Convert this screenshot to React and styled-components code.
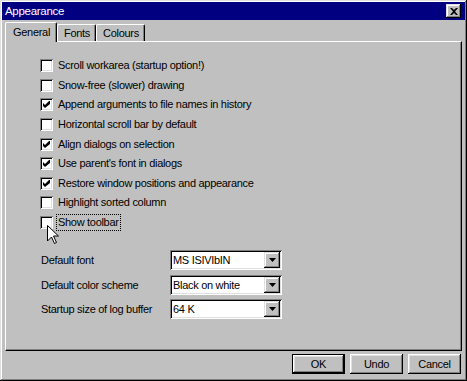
import React from 'react';
import styled, { createGlobalStyle } from 'styled-components';

const GlobalStyle = createGlobalStyle`
  html, body {
    margin: 0;
    padding: 0;
    background: #c0c0c0;
  }
  body {
    font-family: "Liberation Sans", Arial, sans-serif;
    font-size: 11px;
    letter-spacing: -0.3px;
    color: #000;
  }
`;

const raised = `
  box-shadow: inset -1px -1px #000, inset 1px 1px #dfdfdf,
    inset -2px -2px #808080, inset 2px 2px #fff;
`;

const sunken = `
  box-shadow: inset 1px 1px #808080, inset -1px -1px #fff,
    inset 2px 2px #000, inset -2px -2px #dfdfdf;
`;

const options = [
  { label: 'Scroll workarea (startup option!)', checked: false },
  { label: 'Snow-free (slower) drawing', checked: false },
  { label: 'Append arguments to file names in history', checked: true },
  { label: 'Horizontal scroll bar by default', checked: false },
  { label: 'Align dialogs on selection', checked: true },
  { label: "Use parent's font in dialogs", checked: true },
  { label: 'Restore window positions and appearance', checked: true },
  { label: 'Highlight sorted column', checked: false },
  { label: 'Show toolbar', checked: false, focused: true },
];

const combos = [
  { label: 'Default font', value: 'MS ISIVIbIN' },
  { label: 'Default color scheme', value: 'Black on white' },
  { label: 'Startup size of log buffer', value: '64 K' },
];

const Check = () => (
  <svg width="7" height="7" viewBox="0 0 7 7">
    <path d="M0 2 L2 4 L6 0 L7 0 L7 3 L2 7 L0 5 Z" fill="#000" />
  </svg>
);

const Arrow = () => (
  <svg width="7" height="4" viewBox="0 0 7 4">
    <path d="M0 0 H7 L3.5 4 Z" fill="#000" />
  </svg>
);

const App = () => {
  return (
    <>
      <GlobalStyle />
      <Window>
        <TitleBar>
          <Title>Appearance</Title>
          <CloseButton>
            <svg width="8" height="7" viewBox="0 0 8 7">
              <path d="M0 0 H2 L4 2 L6 0 H8 L5 3.5 L8 7 H6 L4 5 L2 7 H0 L3 3.5 Z" fill="#000" />
            </svg>
          </CloseButton>
        </TitleBar>
        <Body>
          <Tabs>
            <Tab $active>General</Tab>
            <Tab>Fonts</Tab>
            <Tab>Colours</Tab>
          </Tabs>
          <Panel>
            <CheckList>
              {options.map((o) => (
                <CheckRow key={o.label}>
                  <Box>{o.checked && <Check />}</Box>
                  <CheckLabel $focused={o.focused}>{o.label}</CheckLabel>
                </CheckRow>
              ))}
            </CheckList>
            <ComboGrid>
              {combos.map((c) => (
                <React.Fragment key={c.label}>
                  <ComboLabel>{c.label}</ComboLabel>
                  <Combo>
                    <ComboText>{c.value}</ComboText>
                    <DropButton>
                      <Arrow />
                    </DropButton>
                  </Combo>
                </React.Fragment>
              ))}
            </ComboGrid>
          </Panel>
          <ButtonRow>
            <Button $default>OK</Button>
            <Button>Undo</Button>
            <Button>Cancel</Button>
          </ButtonRow>
        </Body>
        <Cursor width="12" height="20" viewBox="0 0 12 20">
          <path
            d="M0.5 0.5 V16 L4.5 12 L7.5 18.5 L9.5 17.5 L6.5 11 H11.5 Z"
            fill="#fff"
            stroke="#000"
            strokeWidth="1"
          />
        </Cursor>
      </Window>
    </>
  );
};

export default App;

const Window = styled.div`
  position: relative;
  width: 467px;
  height: 381px;
  box-sizing: border-box;
  padding: 2px;
  background: #c0c0c0;
  display: flex;
  flex-direction: column;
  ${raised}
`;

const TitleBar = styled.div`
  height: 18px;
  background: #000080;
  display: flex;
  align-items: center;
  justify-content: space-between;
  padding: 0 4px 0 3px;
`;

const Title = styled.span`
  color: #fff;
  font-size: 11.5px;
`;

const CloseButton = styled.div`
  width: 15px;
  height: 14px;
  box-sizing: border-box;
  background: #c0c0c0;
  display: flex;
  align-items: center;
  justify-content: center;
  ${raised}
`;

const Body = styled.div`
  flex: 1;
  display: flex;
  flex-direction: column;
  padding: 2px 3px 0;
`;

const Tabs = styled.div`
  height: 19px;
  display: flex;
  align-items: flex-end;
  position: relative;
  z-index: 1;
`;

const Tab = styled.div`
  height: ${(p) => (p.$active ? '20px' : '17px')};
  margin-bottom: ${(p) => (p.$active ? '-1px' : '0')};
  box-sizing: border-box;
  padding: ${(p) => (p.$active ? '3px 6px 0 7px' : '0 5px 0 6px')};
  display: flex;
  align-items: ${(p) => (p.$active ? 'flex-start' : 'center')};
  background: #c0c0c0;
  border-top: 1px solid #fff;
  border-left: 1px solid #fff;
  border-right: 1px solid #000;
  border-radius: 2px 2px 0 0;
  box-shadow: inset -1px 0 #808080;
`;

const Panel = styled.div`
  height: 310px;
  box-sizing: border-box;
  padding: 14px 0 0 34px;
  border-top: 1px solid #fff;
  border-left: 1px solid #fff;
  border-right: 1px solid #000;
  border-bottom: 1px solid #000;
  box-shadow: inset -1px -1px #808080;
`;

const CheckList = styled.div`
  display: flex;
  flex-direction: column;
`;

const CheckRow = styled.div`
  height: 19.6px;
  display: flex;
  align-items: center;
  gap: 3px;
`;

const Box = styled.div`
  width: 13px;
  height: 13px;
  box-sizing: border-box;
  background: #fff;
  display: flex;
  align-items: center;
  justify-content: center;
  ${sunken}
`;

const CheckLabel = styled.span`
  padding: 1px;
  border: 1px dotted ${(p) => (p.$focused ? '#000' : 'transparent')};
  line-height: 13px;
`;

const ComboGrid = styled.div`
  margin-top: 18px;
  margin-left: 1px;
  display: grid;
  grid-template-columns: 129px 112px;
  grid-auto-rows: 20px;
  row-gap: 4.5px;
  align-items: center;
`;

const ComboLabel = styled.span``;

const Combo = styled.div`
  height: 20px;
  box-sizing: border-box;
  background: #fff;
  padding: 2px;
  display: flex;
  align-items: center;
  ${sunken}
`;

const ComboText = styled.span`
  flex: 1;
  padding-left: 1px;
`;

const DropButton = styled.div`
  width: 16px;
  height: 16px;
  box-sizing: border-box;
  background: #c0c0c0;
  display: flex;
  align-items: center;
  justify-content: center;
  ${raised}
`;

const ButtonRow = styled.div`
  margin-top: 3px;
  padding-right: 1px;
  display: flex;
  justify-content: flex-end;
  gap: 5px;
`;

const Button = styled.div`
  width: 53px;
  height: 20px;
  box-sizing: border-box;
  display: flex;
  align-items: center;
  justify-content: center;
  background: #c0c0c0;
  border: ${(p) => (p.$default ? '1px solid #000' : 'none')};
  box-shadow: inset -1px -1px #000, inset 1px 1px #fff,
    inset -2px -2px #808080, inset 2px 2px #dfdfdf;
`;

const Cursor = styled.svg`
  position: absolute;
  left: 47px;
  top: 225px;
`;
